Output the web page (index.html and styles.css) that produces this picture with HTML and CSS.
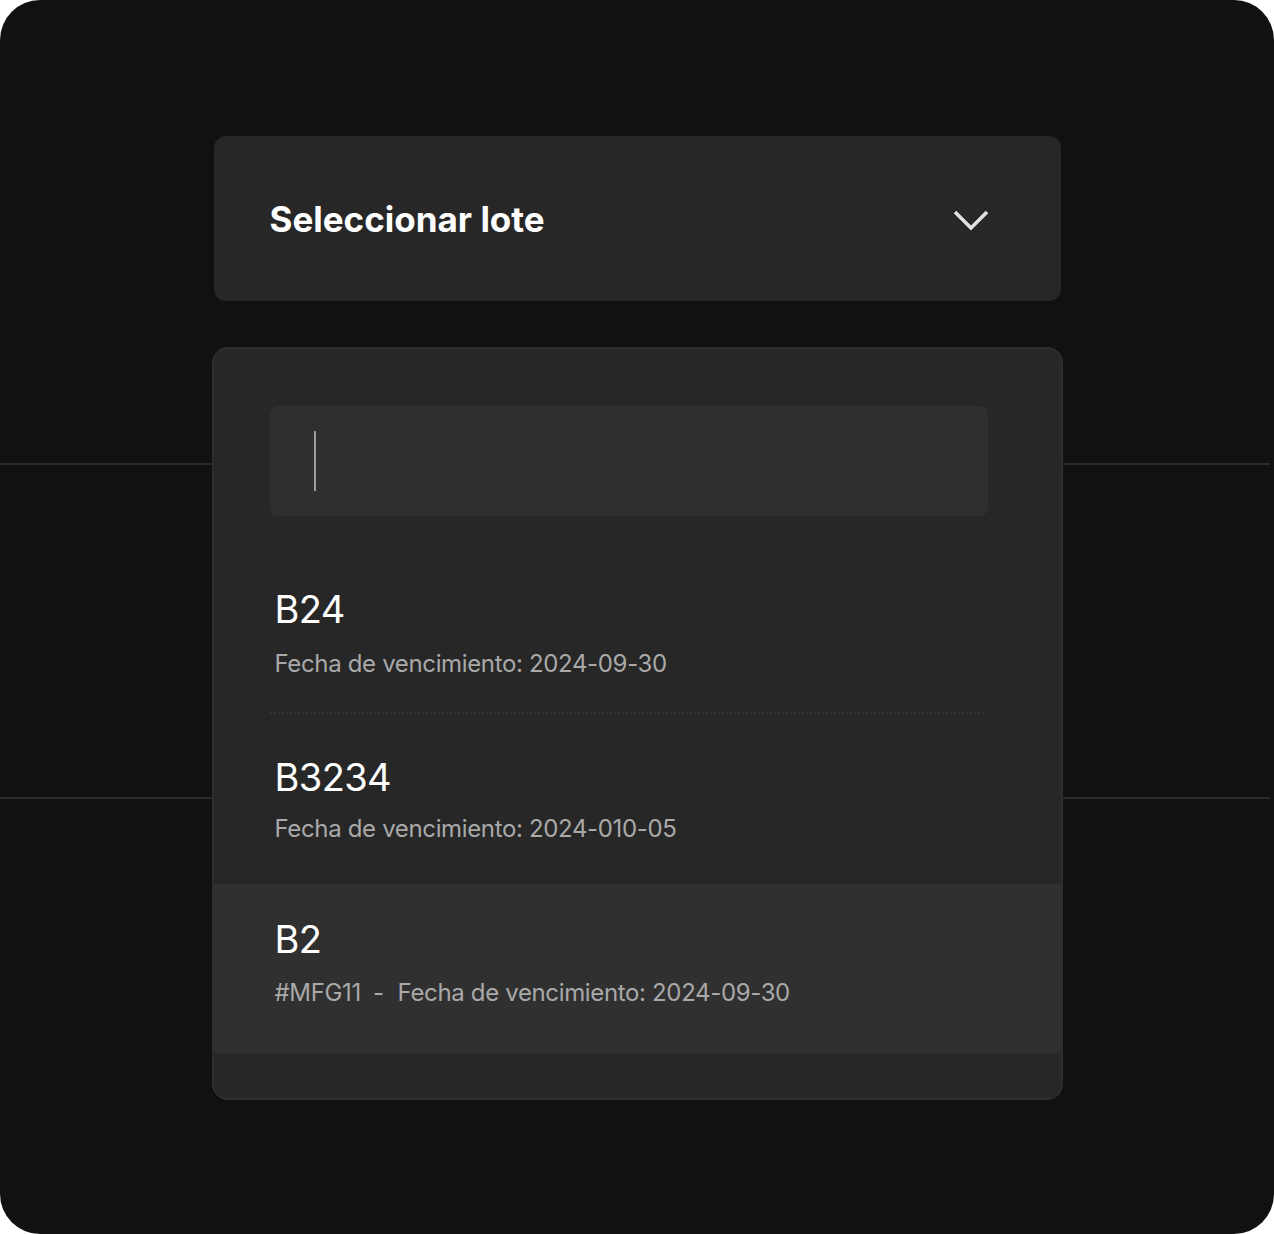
FILE: index.html
```html
<!DOCTYPE html>
<html lang="es">

<head>
    <meta charset="UTF-8">
    <meta name="viewport" content="width=device-width, initial-scale=1.0">
    <title>Seleccionar lote</title>
    <link rel="stylesheet" href="styles.css">
</head>

<body>
    <div class="frame">
        <div class="select">
            <span class="select-label">Seleccionar lote</span>
            <svg class="chevron" width="38" height="24" viewBox="0 0 38 24">
                <path d="M3 3 L19 19 L35 3" fill="none" stroke="#e2e2e2" stroke-width="3.6" />
            </svg>
        </div>

        <div class="panel">
            <div class="search">
                <span class="caret"></span>
            </div>

            <div class="options">
                <div class="option option-first">
                    <div class="option-title">B24</div>
                    <div class="option-meta">Fecha de vencimiento: 2024-09-30</div>
                </div>
                <hr class="rule">
                <div class="option">
                    <div class="option-title">B3234</div>
                    <div class="option-meta">Fecha de vencimiento: 2024-010-05</div>
                </div>
                <div class="option option-active">
                    <div class="option-title">B2</div>
                    <div class="option-meta"><span class="code">#MFG11</span><span class="dash">-</span>Fecha de vencimiento: 2024-09-30</div>
                </div>
            </div>
        </div>
    </div>
</body>

</html>
```

FILE: styles.css
```css
* {
    box-sizing: border-box;
}

body {
    margin: 0;
    background-color: #fff;
    font-family: Inter, "Noto Sans", sans-serif;
}

.frame {
    width: 1274px;
    height: 1234px;
    padding-top: 136px;
    border-radius: 40px;
    background-color: #111;
    /* the two guide lines running behind the panel */
    background-image:
        linear-gradient(#292929, #292929),
        linear-gradient(#292929, #292929);
    background-size: 1270px 2px, 1270px 2px;
    background-position: 0 463px, 0 797px;
    background-repeat: no-repeat;
    display: flex;
    flex-direction: column;
    align-items: center;
}

.select {
    width: 847px;
    height: 165px;
    padding: 0 71px 0 56px;
    border-radius: 12px;
    background-color: #272727;
    display: flex;
    justify-content: space-between;
    align-items: center;
}

.select-label {
    color: #fff;
    font-size: 35px;
    font-weight: 700;
    margin-top: 1px;
}

.chevron {
    display: block;
    margin-top: 4px;
}

.panel {
    width: 851px;
    margin-top: 46px;
    padding: 57px 0 45px;
    border: 2px solid #2e2e2e;
    border-radius: 16px;
    background-color: #272727;
}

.search {
    width: 718px;
    height: 110px;
    margin-left: 56px;
    padding: 25px 0 0 44px;
    border-radius: 8px;
    background-color: #2f2f2f;
}

.caret {
    display: block;
    width: 2px;
    height: 60px;
    background-color: #9d9d9d;
}

.options {
    margin-top: 30px;
}

.option {
    padding: 40px 61px 40px;
    display: flex;
    flex-direction: column;
    gap: 14px;
}

.option-first {
    padding-bottom: 33px;
    gap: 17px;
}

.option-active {
    padding: 32px 61px 45px;
    gap: 16px;
    background-color: #303030;
}

.option-title {
    color: #fff;
    font-size: 38px;
    line-height: 46px;
    letter-spacing: -0.6px;
}

.option-meta {
    color: #a9a9a9;
    font-size: 24px;
    line-height: 30px;
    letter-spacing: -0.35px;
}

.code {
    margin-right: 12px;
}

.dash {
    margin-right: 14px;
}

.rule {
    margin: 0 77px 0 56px;
    border: 0;
    border-top: 2px dotted #333;
}
```
